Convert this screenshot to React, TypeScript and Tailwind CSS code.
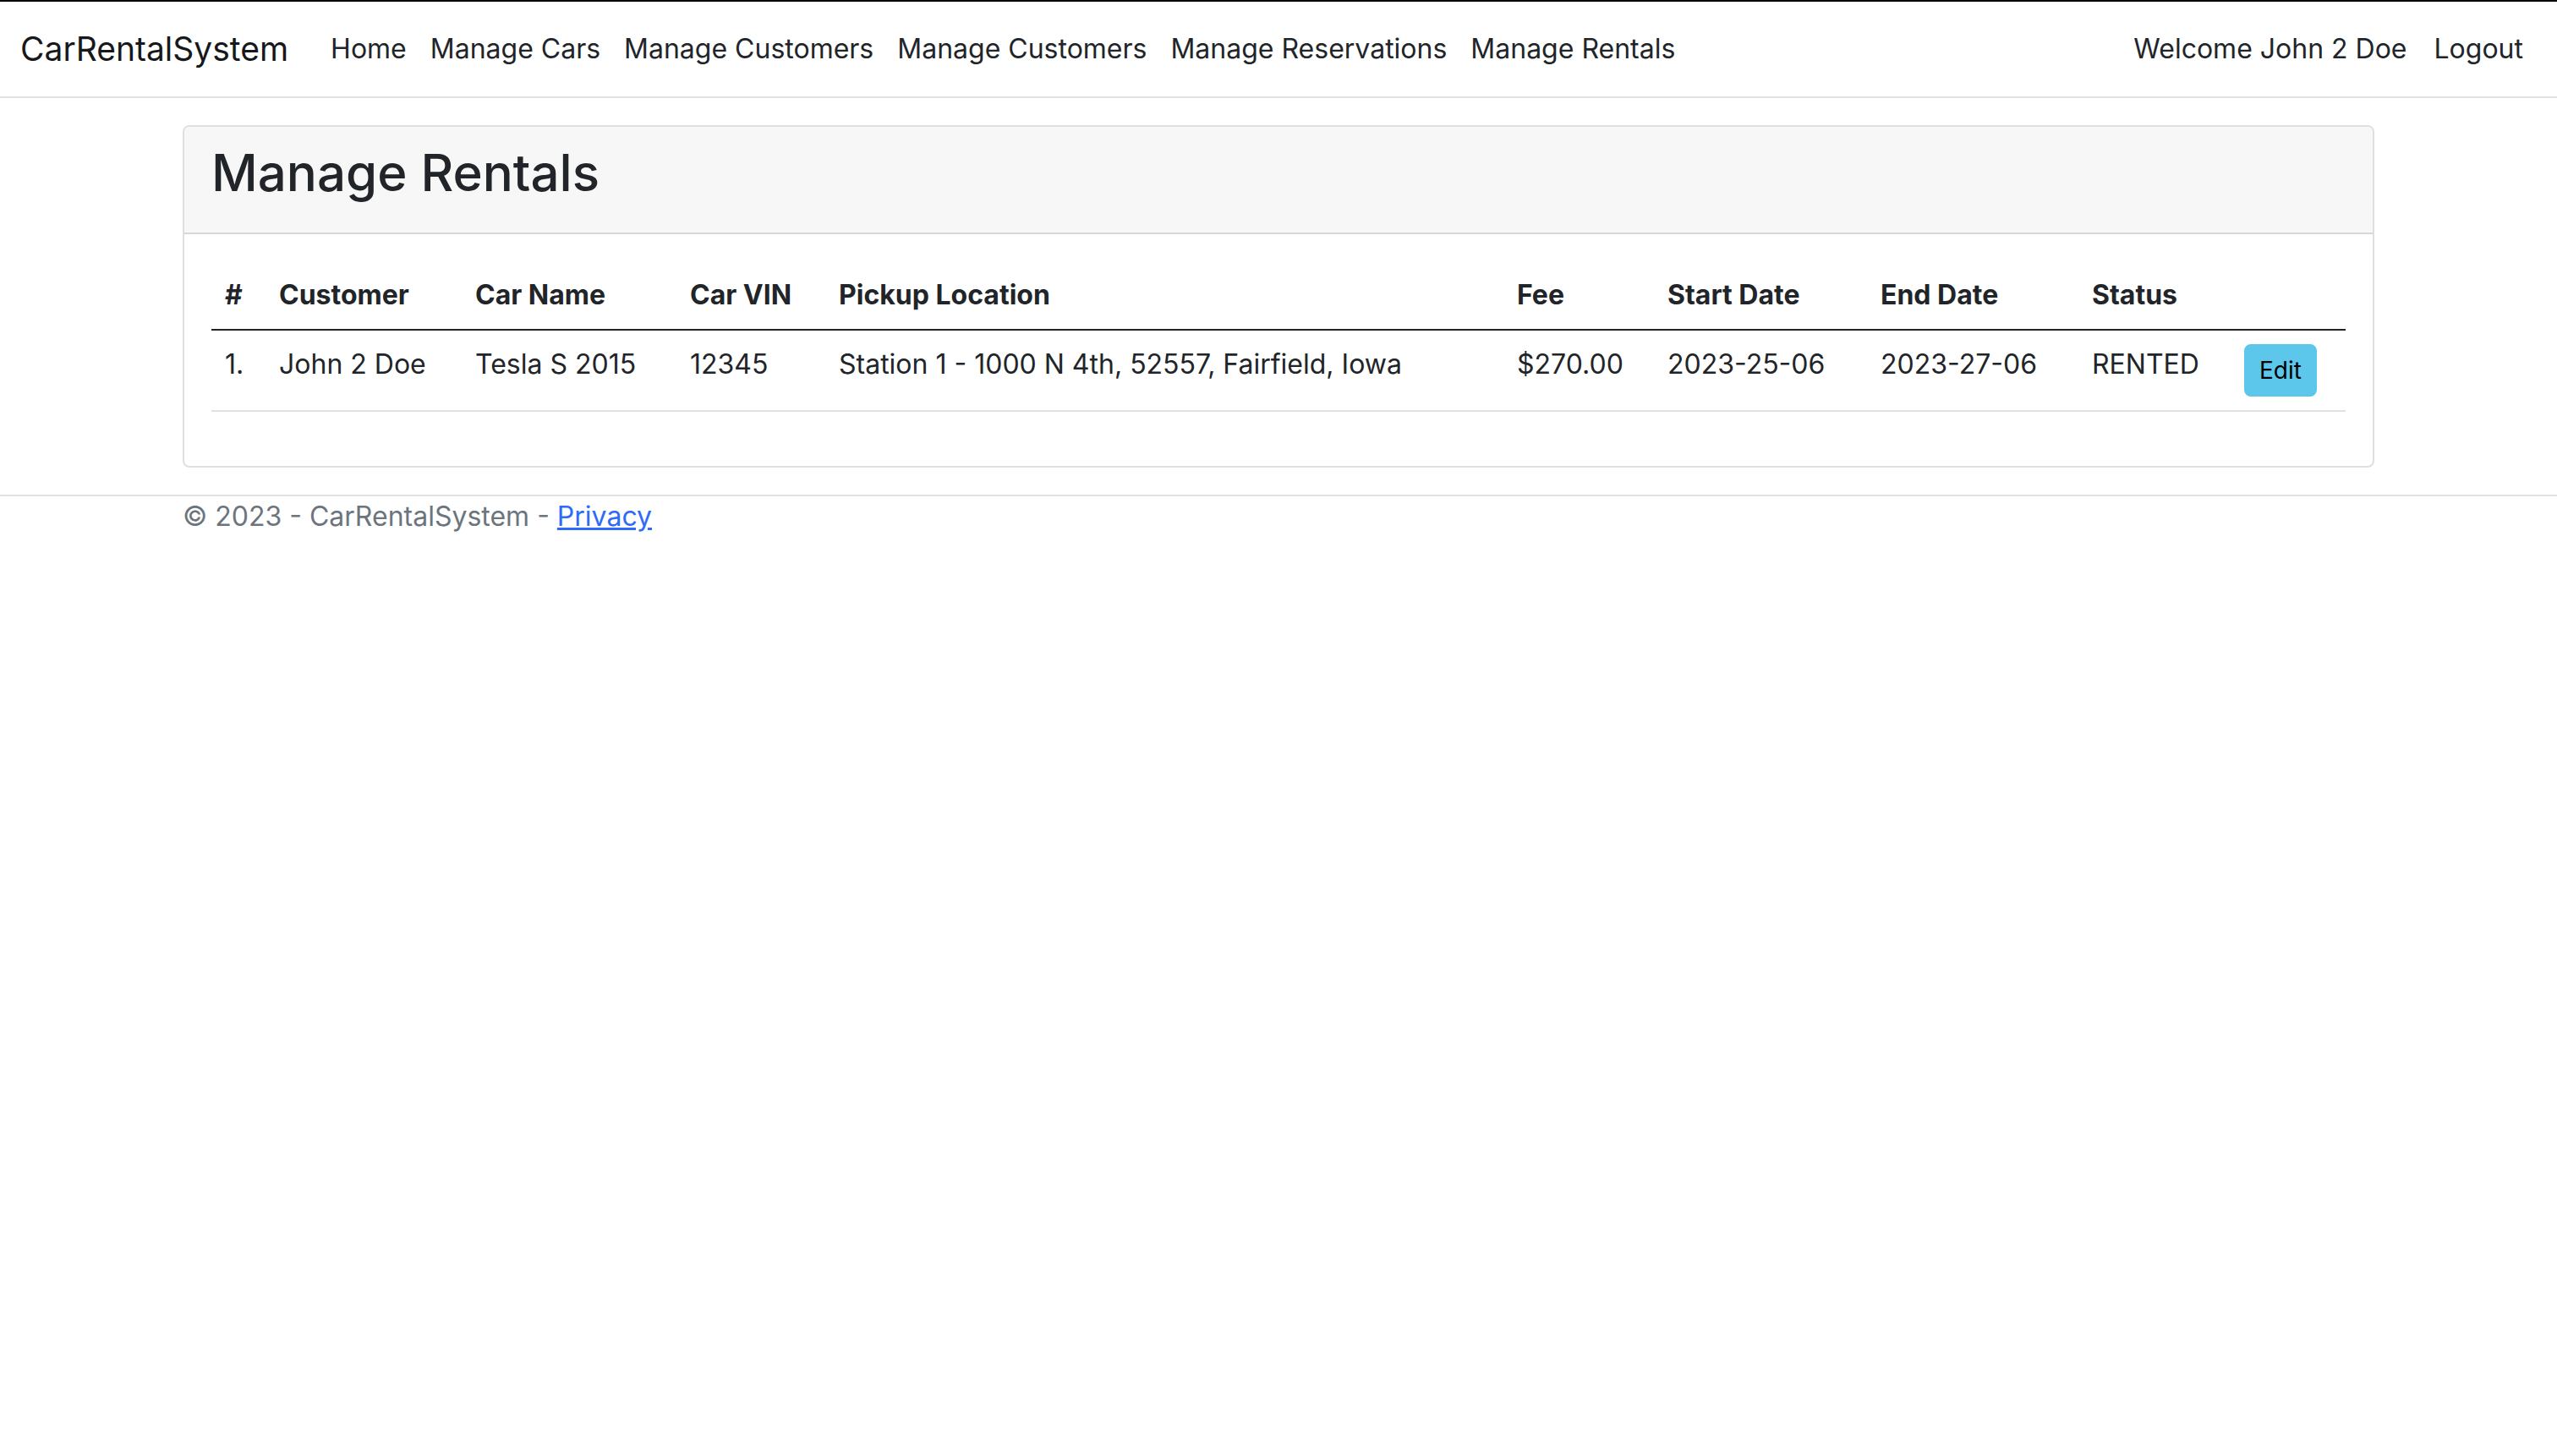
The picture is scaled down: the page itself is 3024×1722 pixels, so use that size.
import React from "react";

const navLinks = [
  "Home",
  "Manage Cars",
  "Manage Customers",
  "Manage Customers",
  "Manage Reservations",
  "Manage Rentals",
];

const headings = [
  { label: "#", width: "w-[64px]" },
  { label: "Customer", width: "w-[232px]" },
  { label: "Car Name", width: "w-[254px]" },
  { label: "Car VIN", width: "w-[176px]" },
  { label: "Pickup Location", width: "w-[802px]" },
  { label: "Fee", width: "w-[178px]" },
  { label: "Start Date", width: "w-[252px]" },
  { label: "End Date", width: "w-[250px]" },
  { label: "Status", width: "w-[180px]" },
  { label: "", width: "w-[136px]" },
];

const rentals = [
  [
    "1.",
    "John 2 Doe",
    "Tesla S 2015",
    "12345",
    "Station 1 - 1000 N 4th, 52557, Fairfield, Iowa",
    "$270.00",
    "2023-25-06",
    "2023-27-06",
    "RENTED",
  ],
];

function NavBar() {
  return (
    <header className="mb-8 border-t-2 border-b-2 border-t-black border-b-[#dee2e6]">
      <nav className="flex items-center px-6 py-4">
        <a href="#" className="mr-9 py-2.5 text-[39px] leading-[60px] text-[#16181b]">
          CarRentalSystem
        </a>
        <ul className="flex grow">
          {navLinks.map((label, i) => (
            <li key={i}>
              <a href="#" className="block px-3.5 py-4 leading-12">{label}</a>
            </li>
          ))}
        </ul>
        <ul className="flex">
          <li>
            <a href="#" className="block p-4 leading-12">Welcome John 2 Doe</a>
          </li>
          <li>
            <a href="#" className="block p-4 leading-12">Logout</a>
          </li>
        </ul>
      </nav>
    </header>
  );
}

function RentalsTable() {
  return (
    <table className="mb-8 w-full table-fixed border-collapse text-left align-top">
      <thead>
        <tr className="border-b-2 border-[#212529]">
          {headings.map(({ label, width }, i) => (
            <th key={i} className={`${width} p-4 font-bold`}>{label}</th>
          ))}
        </tr>
      </thead>
      <tbody>
        {rentals.map((row) => (
          <tr key={row[0]} className="border-b-2 border-[#dee2e6]">
            {row.map((cell, i) => (
              <td key={i} className="p-4 align-top whitespace-nowrap">{cell}</td>
            ))}
            <td className="p-4 align-top">
              <button className="block rounded-lg border-2 border-[#5dc6eb] bg-[#5dc6eb] px-4 py-2 text-[28px] leading-[42px] text-black">
                Edit
              </button>
            </td>
          </tr>
        ))}
      </tbody>
    </table>
  );
}

export default function App() {
  return (
    <div className="min-h-screen bg-white font-[Inter,sans-serif] text-[32px] leading-12 text-[#212529]">
      <NavBar />
      <main className="mx-54 mb-8 overflow-hidden rounded-lg border-2 border-[#dfdfdf]">
        <h1 className="border-b-2 border-[#d8d8d8] bg-[#f7f7f7] px-8 pt-4 pb-8 text-[60px] leading-[77px] font-medium">
          Manage Rentals
        </h1>
        <div className="p-8">
          <RentalsTable />
        </div>
      </main>
      <footer className="border-t-2 border-[#dee2e6] px-54 text-[#6c757d]">
        © 2023 - CarRentalSystem -{" "}
        <a href="#" className="text-[#2e6bf6] underline">Privacy</a>
      </footer>
    </div>
  );
}
